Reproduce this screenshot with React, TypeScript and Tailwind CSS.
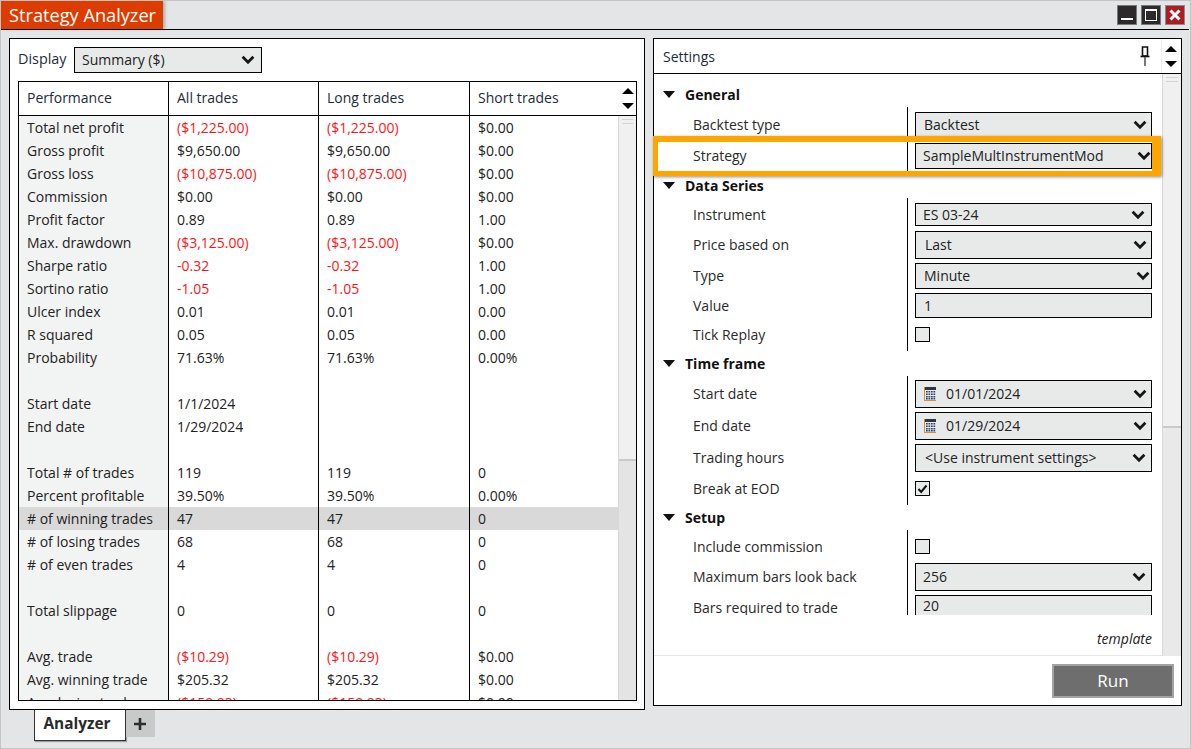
import React from "react";

const Chevron = () => (
  <svg width="14" height="10" viewBox="0 0 14 10" className="shrink-0">
    <path d="M1.6 1.8 L7 7.2 L12.4 1.8" fill="none" stroke="#161616" strokeWidth="2.8" />
  </svg>
);

const Up = () => (
  <svg width="12" height="6" viewBox="0 0 12 6"><path d="M6 0 L12 6 L0 6 Z" fill="#000" /></svg>
);
const Down = () => (
  <svg width="12" height="6" viewBox="0 0 12 6"><path d="M0 0 L12 0 L6 6 Z" fill="#000" /></svg>
);

const Grip = () => (
  <div className="flex flex-col gap-[3px] px-[3px] pt-[3px]">
    <div className="h-px bg-[#d4d4d4]" />
    <div className="h-px bg-[#d4d4d4]" />
  </div>
);

type Row = [string, string, string, string];
const rows: Row[] = [
  ["Total net profit", "($1,225.00)", "($1,225.00)", "$0.00"],
  ["Gross profit", "$9,650.00", "$9,650.00", "$0.00"],
  ["Gross loss", "($10,875.00)", "($10,875.00)", "$0.00"],
  ["Commission", "$0.00", "$0.00", "$0.00"],
  ["Profit factor", "0.89", "0.89", "1.00"],
  ["Max. drawdown", "($3,125.00)", "($3,125.00)", "$0.00"],
  ["Sharpe ratio", "-0.32", "-0.32", "1.00"],
  ["Sortino ratio", "-1.05", "-1.05", "1.00"],
  ["Ulcer index", "0.01", "0.01", "0.00"],
  ["R squared", "0.05", "0.05", "0.00"],
  ["Probability", "71.63%", "71.63%", "0.00%"],
  ["", "", "", ""],
  ["Start date", "1/1/2024", "", ""],
  ["End date", "1/29/2024", "", ""],
  ["", "", "", ""],
  ["Total # of trades", "119", "119", "0"],
  ["Percent profitable", "39.50%", "39.50%", "0.00%"],
  ["# of winning trades", "47", "47", "0"],
  ["# of losing trades", "68", "68", "0"],
  ["# of even trades", "4", "4", "0"],
  ["", "", "", ""],
  ["Total slippage", "0", "0", "0"],
  ["", "", "", ""],
  ["Avg. trade", "($10.29)", "($10.29)", "$0.00"],
  ["Avg. winning trade", "$205.32", "$205.32", "$0.00"],
  ["Avg. losing trade", "($159.93)", "($159.93)", "$0.00"],
];

const headClass = [
  "w-[150px] border-r border-black",
  "w-[150px] border-r border-black",
  "w-[151px] border-r border-black",
  "w-[149px]",
];
const colClass = [
  "w-[150px] bg-[#f2f3f3] border-r border-black",
  "w-[150px] border-r border-black",
  "w-[151px] border-r border-black",
  "w-[148px]",
];

function isNeg(v: string) {
  return v.startsWith("(") || v.startsWith("-");
}

function Column({ index }: { index: number }) {
  return (
    <div className={`${colClass[index]} shrink-0`}>
      {rows.map((r, i) => {
        const v = r[index];
        const hi = i === 17;
        return (
          <div
            key={i}
            className={`h-[23px] pl-2 leading-[23px] whitespace-nowrap ${hi ? "bg-[#d9d9d9]" : ""} ${
              index > 0 && isNeg(v) ? "text-[#ff1414]" : "text-[#222]"
            }`}
          >
            {v}
          </div>
        );
      })}
    </div>
  );
}

function CalendarIcon() {
  return (
    <svg width="12" height="14" viewBox="0 0 12 14" className="shrink-0">
      <rect x="0" y="0" width="12" height="14" fill="#d9893f" />
      <rect x="1" y="0" width="11" height="3" fill="#2f3640" />
      <rect x="1" y="3" width="11" height="10" fill="#e9edf2" />
      {[4, 6.5, 9, 11].map((y) =>
        [2, 4.5, 7, 9.5].map((x) => <rect key={`${x}-${y}`} x={x} y={y} width="1.7" height="1.5" fill="#27405f" />)
      )}
    </svg>
  );
}

type FieldKind = "select" | "text" | "check" | "checked" | "date";

function Field({ kind, value, box, lift }: { kind: FieldKind; value?: string; box?: string; lift?: string }) {
  if (kind === "check" || kind === "checked") {
    return (
      <div className="h-full flex items-center">
        <div className="w-[15px] h-[15px] border border-black bg-[#e8eaea] flex items-center justify-center">
          {kind === "checked" && (
            <svg width="11" height="10" viewBox="0 0 11 10">
              <path d="M1.5 5 L4.2 8 L9.5 1.5" fill="none" stroke="#111" strokeWidth="2" />
            </svg>
          )}
        </div>
      </div>
    );
  }
  return (
    <div className={`${box ?? "pl-2 pr-[4px]"} h-full w-[237px] border border-black bg-[#e8eaea] flex items-center text-[#222] whitespace-nowrap overflow-hidden`}>
      {kind === "date" && (
        <span className="mr-[10px] flex">
          <CalendarIcon />
        </span>
      )}
      <span className={`${lift ?? ""} flex-1`}>{value}</span>
      {kind !== "text" && <Chevron />}
    </div>
  );
}

type PropRow = {
  label: string;
  kind: FieldKind;
  value?: string;
  h: string;
  pad: string;
  box?: string;
  lift?: string;
  fieldLift?: string;
};

const sections: { title: string; head: string; rows: PropRow[] }[] = [
  {
    title: "General",
    head: "h-[23px] mt-[10px] pb-[2px]",
    rows: [
      { label: "Backtest type", kind: "select", value: "Backtest", h: "h-[31px]", pad: "pt-[5px]", lift: "pb-[2px]", fieldLift: "pb-[2px]" },
      { label: "Strategy", kind: "select", value: "SampleMultInstrumentMod", h: "h-[33px]", pad: "pt-[5px] pb-[2px]", box: "pl-[7px] pr-0", lift: "pb-[2px]", fieldLift: "pb-[2px]" },
    ],
  },
  {
    title: "Data Series",
    head: "h-[27px] pt-[2px]",
    rows: [
      { label: "Instrument", kind: "select", value: "ES 03-24", h: "h-[28px]", pad: "pt-[5px]", box: "pl-[7px] pr-[6px]" },
      { label: "Price based on", kind: "select", value: "Last", h: "h-[33px]", pad: "pt-[5px]", box: "pl-[9px] pr-[4px]", lift: "pb-[2px]", fieldLift: "pb-[2px]" },
      { label: "Type", kind: "select", value: "Minute", h: "h-[30px]", pad: "pt-[4px]", box: "pl-2 pr-[1px]", lift: "pb-[2px]", fieldLift: "pb-[2px]" },
      { label: "Value", kind: "text", value: "1", h: "h-[29px]", pad: "pt-[4px]" },
      { label: "Tick Replay", kind: "check", h: "h-[33px]", pad: "pt-[4px] pb-[5px]" },
    ],
  },
  {
    title: "Time frame",
    head: "h-[25px]",
    rows: [
      { label: "Start date", kind: "date", value: "01/01/2024", h: "h-[32px]", pad: "pt-[4px]", lift: "pb-[2px]", fieldLift: "pb-[2px]" },
      { label: "End date", kind: "date", value: "01/29/2024", h: "h-[32px]", pad: "pt-[4px]", lift: "pb-[2px]", fieldLift: "pb-[2px]" },
      { label: "Trading hours", kind: "select", value: "<Use instrument settings>", h: "h-[32px]", pad: "pt-[4px]", box: "pl-[9px] pr-[5px]", lift: "pb-[2px]", fieldLift: "pb-[2px]" },
      { label: "Break at EOD", kind: "checked", h: "h-[33px]", pad: "pt-[4px] pb-[4px]" },
    ],
  },
  {
    title: "Setup",
    head: "h-[25px]",
    rows: [
      { label: "Include commission", kind: "check", h: "h-[29px]", pad: "pt-[4px]" },
      { label: "Maximum bars look back", kind: "select", value: "256", h: "h-[32px]", pad: "pt-[4px]", box: "pl-[7px] pr-[5px]", lift: "pb-[2px]", fieldLift: "pb-[2px]" },
      { label: "Bars required to trade", kind: "text", value: "20", h: "h-[32px]", pad: "pt-[4px]", box: "pl-[7px] pr-[5px]", lift: "pb-[4px]", fieldLift: "pb-[7px]" },
    ],
  },
];

export default function App() {
  return (
    <div
      className="w-[1191px] h-[749px] bg-[#e4e5e7] border border-[#c4c4c4] overflow-hidden flex flex-col text-[14px] text-[#222] relative"
      style={{ fontFamily: '"Open Sans", "Noto Sans", sans-serif' }}
    >
      {/* Title bar */}
      <div className="h-[29px] shrink-0 flex items-stretch border-b border-black mr-px">
        <div className="w-[162px] h-[28px] bg-[#dd3c00] text-white text-[18.2px] leading-[28px] pl-[8px] shadow-[2px_0_3px_rgba(0,0,0,0.25)] whitespace-nowrap">
          Strategy Analyzer
        </div>
        <div className="ml-auto flex gap-[4px] pt-[4px] pr-[4px]">
          <div className="w-[20px] h-[20px] bg-[#2b2929] border border-[#7a7a7a] flex items-end justify-center pb-[4px]">
            <div className="w-[12px] h-[2px] bg-white" />
          </div>
          <div className="w-[20px] h-[20px] bg-[#2b2929] border border-[#7a7a7a] flex items-center justify-center">
            <div className="w-[12px] h-[12px] border border-white border-t-[2px]" />
          </div>
          <div className="w-[20px] h-[20px] bg-[#a81e24] border border-[#8d8d8d] flex items-center justify-center">
            <svg width="12" height="12" viewBox="0 0 12 12">
              <path d="M1.5 1.5 L10.5 10.5 M10.5 1.5 L1.5 10.5" stroke="#fff" strokeWidth="3" />
            </svg>
          </div>
        </div>
      </div>

      {/* Main */}
      <div className="flex items-start gap-[8px] pl-[8px] pt-[8px]">
        {/* Left column */}
        <div className="w-[636px] shrink-0">
          <div className="h-[672px] border border-black bg-white px-[8px] pt-[8px]">
            <div className="flex items-center h-[26px]">
              <span className="w-[56px] pb-[2px] text-[#1d2b3a] text-[14.4px]">Display</span>
              <div className="w-[188px] h-[26px] border border-black bg-[#e8eaea] flex items-center pl-[7px] pr-[6px]">
                <span className="flex-1 pb-[2px]">Summary ($)</span>
                <Chevron />
              </div>
            </div>
            {/* Grid */}
            <div className="mt-[8px] w-[619px] h-[620px] border border-black flex flex-col overflow-hidden">
              <div className="h-[34px] shrink-0 flex border-b border-black">
                {["Performance", "All trades", "Long trades", "Short trades"].map((t, i) => (
                  <div key={t} className={`${headClass[i]} shrink-0 pl-2 pb-[3px] flex items-center text-[#1d2b3a]`}>
                    {t}
                  </div>
                ))}
                <div className="flex-1 flex flex-col items-center justify-center gap-[9px]">
                  <Up />
                  <Down />
                </div>
              </div>
              <div className="flex-1 flex min-h-0 overflow-hidden">
                <Column index={0} />
                <Column index={1} />
                <Column index={2} />
                <Column index={3} />
                <div className="flex-1 bg-[#e4e4e4] border-l border-[#d8d8d8]">
                  <div className="h-[345px] bg-[#f0f0f0] border-b-2 border-[#c9c9c9]">
                    <Grip />
                  </div>
                </div>
              </div>
            </div>
          </div>
          {/* Tabs */}
          <div className="flex ml-[25px]">
            <div className="w-[92px] h-[31px] bg-white border-x border-b border-[#333] font-bold text-[15.4px] text-[#2a2a2a] flex items-center justify-center pr-[6px] pb-[3px] shadow-[1px_1px_1px_rgba(0,0,0,0.3)]">
              Analyzer
            </div>
            <div className="w-[29px] h-[27px] bg-[#c8c9c9] flex items-center justify-center pr-[2px]">
              <svg width="14" height="14" viewBox="0 0 14 14">
                <path d="M7 1 V13 M1 7 H13" stroke="#2d2d2d" strokeWidth="2.6" />
              </svg>
            </div>
          </div>
        </div>

        {/* Settings panel */}
        <div className="w-[529px] h-[668px] shrink-0 border border-black bg-white flex flex-col">
          <div className="h-[35px] shrink-0 flex items-center border-b border-black pl-[9px]">
            <span className="flex-1 text-[#1d2b3a]">Settings</span>
            <svg width="10" height="20" viewBox="0 0 10 20" className="mr-[11px]">
              <path d="M2.5 1 H7.5 V10 H2.5 Z" fill="none" stroke="#111" strokeWidth="1.6" />
              <path d="M0.5 10.5 H9.5" stroke="#111" strokeWidth="1.6" />
              <path d="M5 11 V20" stroke="#555" strokeWidth="1.6" />
            </svg>
            <div className="w-[19px] mr-px h-full bg-white flex flex-col items-center justify-center gap-[9px] border-l border-[#eeeeee]">
              <Up />
              <Down />
            </div>
          </div>
          <div className="h-[582px] shrink-0 flex">
            <div className="w-[508px] shrink-0 border-b border-[#e6e6e6]">
              <div className="h-[541px] overflow-hidden">
                {sections.map((s) => (
                  <div key={s.title}>
                    <div className={`${s.head} flex items-center pl-[9px] font-bold text-[#111]`}>
                      <svg width="12" height="7" viewBox="0 0 12 7" className="mr-[10px]">
                        <path d="M0 0 H12 L6 7 Z" fill="#111" />
                      </svg>
                      {s.title}
                    </div>
                    {s.rows.map((r) => (
                      <div key={r.label} className={`${r.h} flex`}>
                        <div className={`${r.pad} w-[254px] shrink-0 border-r border-black pl-[39px] flex items-center text-[#2a2a2a]`}>
                          <span className={r.lift ?? ""}>{r.label}</span>
                        </div>
                        <div className={`${r.pad} pl-[7px]`}>
                          <Field kind={r.kind} value={r.value} box={r.box} lift={r.fieldLift} />
                        </div>
                      </div>
                    ))}
                  </div>
                ))}
              </div>
              <div className="h-[40px] flex items-center justify-end pt-[6px] pr-[8px]">
                <div className="w-[57px] overflow-hidden italic whitespace-nowrap text-[#222]">template</div>
              </div>
            </div>
            <div className="flex-1 bg-[#e9e9e9] border-l border-[#d8d8d8]">
              <div className="h-[354px] bg-[#f0f0f0] border-b-2 border-[#c9c9c9]">
                <Grip />
              </div>
            </div>
          </div>
          <div className="flex-1 flex justify-end items-start pt-[8px] pr-[7px]">
            <div className="w-[122px] h-[34px] bg-[#6e6e6e] border-2 border-[#a3a3a3] text-white text-[17px] flex items-center justify-center">
              Run
            </div>
          </div>
        </div>
      </div>

      {/* Annotation highlight */}
      <div className="absolute left-[652px] top-[135px] w-[508px] h-[40px] border-[#ffa500] border-l-[5px] border-b-[5px] border-t-[6px] border-r-[9px] shadow-[1px_1px_3px_rgba(0,0,0,0.45)]" />
    </div>
  );
}
